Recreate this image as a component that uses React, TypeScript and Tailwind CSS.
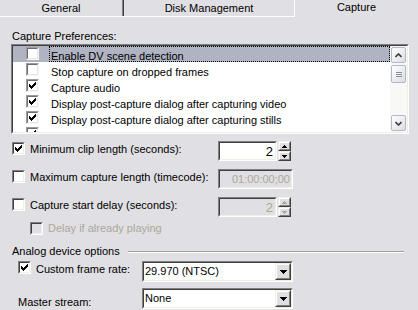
import React from "react";

const CHECK =
  "M6 0h1v1h-1z M5 1h2v1h-2z M0 2h1v1h-1z M4 2h3v1h-3z M0 3h2v1h-2z M3 3h3v1h-3z M0 4h5v1h-5z M1 5h3v1h-3z M2 6h1v1h-1z";

function CheckMark({ color = "#000" }: { color?: string }) {
  return (
    <svg width="7" height="7" viewBox="0 0 7 7" shapeRendering="crispEdges">
      <path fill={color} d={CHECK} />
    </svg>
  );
}

function Checkbox({ checked, disabled }: { checked?: boolean; disabled?: boolean }) {
  return (
    <div className="w-[13px] h-[13px] shrink-0 border border-t-[#808080] border-l-[#808080] border-b-white border-r-white">
      <div
        className={`w-full h-full border border-t-[#404040] border-l-[#404040] border-b-[#f1efe2] border-r-[#f1efe2] flex items-center justify-center ${
          disabled ? "bg-[#e0dfe3]" : "bg-white"
        }`}
      >
        {checked && <CheckMark color={disabled ? "#aca899" : "#000"} />}
      </div>
    </div>
  );
}

function ListCheck({ checked }: { checked?: boolean }) {
  return (
    <div className="w-[13px] h-[13px] shrink-0 border border-t-[#9c9c9c] border-l-[#9c9c9c] border-b-[#f4f4f4] border-r-[#f4f4f4]">
      <div className="w-full h-full border border-t-[#6e6e6e] border-l-[#6e6e6e] border-b-[#e8e8e8] border-r-[#e8e8e8] bg-white flex items-center justify-center">
        {checked && <CheckMark />}
      </div>
    </div>
  );
}

function Sunken({ className, inner, children }: { className: string; inner: string; children?: React.ReactNode }) {
  return (
    <div className={`border border-t-[#808080] border-l-[#808080] border-b-white border-r-white ${className}`}>
      <div className={`h-full border border-t-[#404040] border-l-[#404040] border-b-[#f1efe2] border-r-[#f1efe2] ${inner}`}>
        {children}
      </div>
    </div>
  );
}

function Raised({ className, children }: { className: string; children?: React.ReactNode }) {
  return (
    <div className={`border border-t-[#f1efe2] border-l-[#f1efe2] border-b-[#404040] border-r-[#404040] ${className}`}>
      <div className="h-full border border-t-white border-l-white border-b-[#808080] border-r-[#808080] bg-[#e0dfe3] flex items-center justify-center">
        {children}
      </div>
    </div>
  );
}

function Tri({ up, w = 5, disabled }: { up?: boolean; w?: number; disabled?: boolean }) {
  const h = Math.ceil(w / 2);
  const pts = up ? `0,${h} ${w / 2},0 ${w},${h}` : `0,0 ${w / 2},${h} ${w},0`;
  return (
    <svg width={w} height={h} viewBox={`0 0 ${w} ${h}`} shapeRendering="crispEdges">
      <polygon points={pts} fill={disabled ? "#aca899" : "#000"} />
    </svg>
  );
}

function Spin({ value, disabled }: { value: string; disabled?: boolean }) {
  return (
    <div className="flex h-[20px]">
      <Sunken
        className="w-[59px] h-[20px]"
        inner={`flex items-center justify-end pr-[2px] text-[13px] ${disabled ? "bg-[#e0dfe3] text-[#aca899]" : "bg-white text-black"}`}
      >
        {value}
      </Sunken>
      <div className="ml-[1px] flex flex-col w-[13px]">
        <Raised className="h-[10px]">
          <Tri up disabled={disabled} />
        </Raised>
        <Raised className="h-[10px]">
          <Tri disabled={disabled} />
        </Raised>
      </div>
    </div>
  );
}

function Combo({ value }: { value: string }) {
  return (
    <Sunken className="w-[151px] h-[21px]" inner="bg-white flex items-center">
      <span className="flex-1 pl-[1px]">{value}</span>
      <Raised className="w-[16px] h-[17px]">
        <Tri w={7} />
      </Raised>
    </Sunken>
  );
}

function ScrollBtn({ up }: { up?: boolean }) {
  return (
    <div className="h-[16px] mx-[1px] rounded-[2px] border border-[#b3b8c8] bg-gradient-to-br from-white to-[#dcdde6] flex items-center justify-center">
      <svg width="7" height="5" viewBox="0 0 7 5">
        <polyline
          points={up ? "0.5,4 3.5,1 6.5,4" : "0.5,1 3.5,4 6.5,1"}
          fill="none"
          stroke="#3c3c3c"
          strokeWidth="1.6"
        />
      </svg>
    </div>
  );
}

const rows = [
  { label: "Enable DV scene detection", checked: false },
  { label: "Stop capture on dropped frames", checked: false },
  { label: "Capture audio", checked: true },
  { label: "Display post-capture dialog after capturing video", checked: true },
  { label: "Display post-capture dialog after capturing stills", checked: true },
  { label: "Enable stills capture", checked: true },
];

export default function App() {
  return (
    <div className="w-[418px] h-[310px] overflow-hidden bg-[#e0dfe3] text-black text-[11px] leading-[13px] whitespace-nowrap font-['Liberation_Sans',Arial,sans-serif] flex flex-col">
      {/* tabs */}
      <div className="flex h-[17px] shrink-0">
        <div className="w-[124px] border-b border-white flex">
          <div className="flex-1 flex items-center justify-center border-r border-[#808080]">General</div>
          <div className="w-[1px] bg-[#404040]" />
        </div>
        <div className="w-[171px] border-b border-r border-white flex items-center justify-center">
          Disk Management
        </div>
        <div className="flex-1 flex items-start justify-center pt-[1px]">Capture</div>
      </div>

      <div className="pl-[12px] mt-[13px]">Capture Preferences:</div>

      {/* list */}
      <div className="ml-[11px] mr-[9px] mt-[1px]">
        <Sunken className="h-[90px]" inner="bg-white flex overflow-hidden">
          <div className="flex-1 flex flex-col">
            {rows.map((r, i) => (
              <div key={i} className={`h-[16px] shrink-0 flex items-start ${i === 0 ? "bg-[#b0b3c2]" : ""}`}>
                <div className="ml-[13px] mt-[1px]">
                  <ListCheck checked={r.checked} />
                </div>
                <div
                  className={`ml-[10px] flex-1 h-[16px] pl-[1px] pt-[3px] leading-[12px] border border-dotted ${
                    i === 0 ? "border-black" : "border-transparent"
                  }`}
                >
                  {r.label}
                </div>
              </div>
            ))}
          </div>
          <div className="w-[17px] shrink-0 flex flex-col bg-[#f8f8f6] pt-[1px] pb-[1px]">
            <ScrollBtn up />
            <div className="h-[2px]" />
            <div className="h-[18px] mx-[1px] rounded-[2px] border border-[#b3b8c8] bg-gradient-to-br from-white to-[#dcdde6] flex flex-col items-center justify-center gap-[1px]">
              <div className="w-[6px] h-[1px] bg-[#8c8c9c]" />
              <div className="w-[6px] h-[1px] bg-[#8c8c9c]" />
              <div className="w-[6px] h-[1px] bg-[#8c8c9c]" />
            </div>
            <div className="flex-1" />
            <ScrollBtn />
          </div>
        </Sunken>
      </div>

      {/* options */}
      <div className="mt-[7px] h-[20px] flex items-start">
        <div className="w-[218px] pl-[12px] flex items-start">
          <div className="mt-[1px]">
            <Checkbox checked />
          </div>
          <span className="ml-[5px] mt-[2px]">Minimum clip length (seconds):</span>
        </div>
        <Spin value="2" />
      </div>

      <div className="mt-[8px] h-[20px] flex items-start">
        <div className="w-[218px] pl-[12px] flex items-start">
          <div className="mt-[1px]">
            <Checkbox />
          </div>
          <span className="ml-[5px] mt-[2px]">Maximum capture length (timecode):</span>
        </div>
        <Sunken className="w-[75px] h-[20px]" inner="bg-[#e0dfe3] text-[#aca899] flex items-center justify-end pr-[1px]">
          01:00:00;00
        </Sunken>
      </div>

      <div className="mt-[8px] h-[20px] flex items-start">
        <div className="w-[218px] pl-[12px] flex items-start">
          <div className="mt-[1px]">
            <Checkbox />
          </div>
          <span className="ml-[5px] mt-[2px]">Capture start delay (seconds):</span>
        </div>
        <Spin value="2" disabled />
      </div>

      <div className="mt-[5px] h-[13px] pl-[30px] flex items-start">
        <Checkbox disabled />
        <span className="ml-[5px] text-[#aca899]">Delay if already playing</span>
      </div>

      <div className="mt-[10px] pl-[12px] pr-[14px] flex items-center">
        <span>Analog device options</span>
        <div className="flex-1 ml-[8px] h-[2px] border-t border-[#a0a0a0] border-b border-b-white" />
      </div>

      <div className="mt-[3px] h-[21px] flex items-start">
        <div className="w-[142px] pl-[18px] flex items-start">
          <Checkbox checked />
          <span className="ml-[5px] mt-[2px]">Custom frame rate:</span>
        </div>
        <Combo value="29.970 (NTSC)" />
      </div>

      <div className="mt-[6px] h-[21px] flex items-start">
        <div className="w-[142px] pl-[18px] pt-[8px]">Master stream:</div>
        <Combo value="None" />
      </div>
    </div>
  );
}
